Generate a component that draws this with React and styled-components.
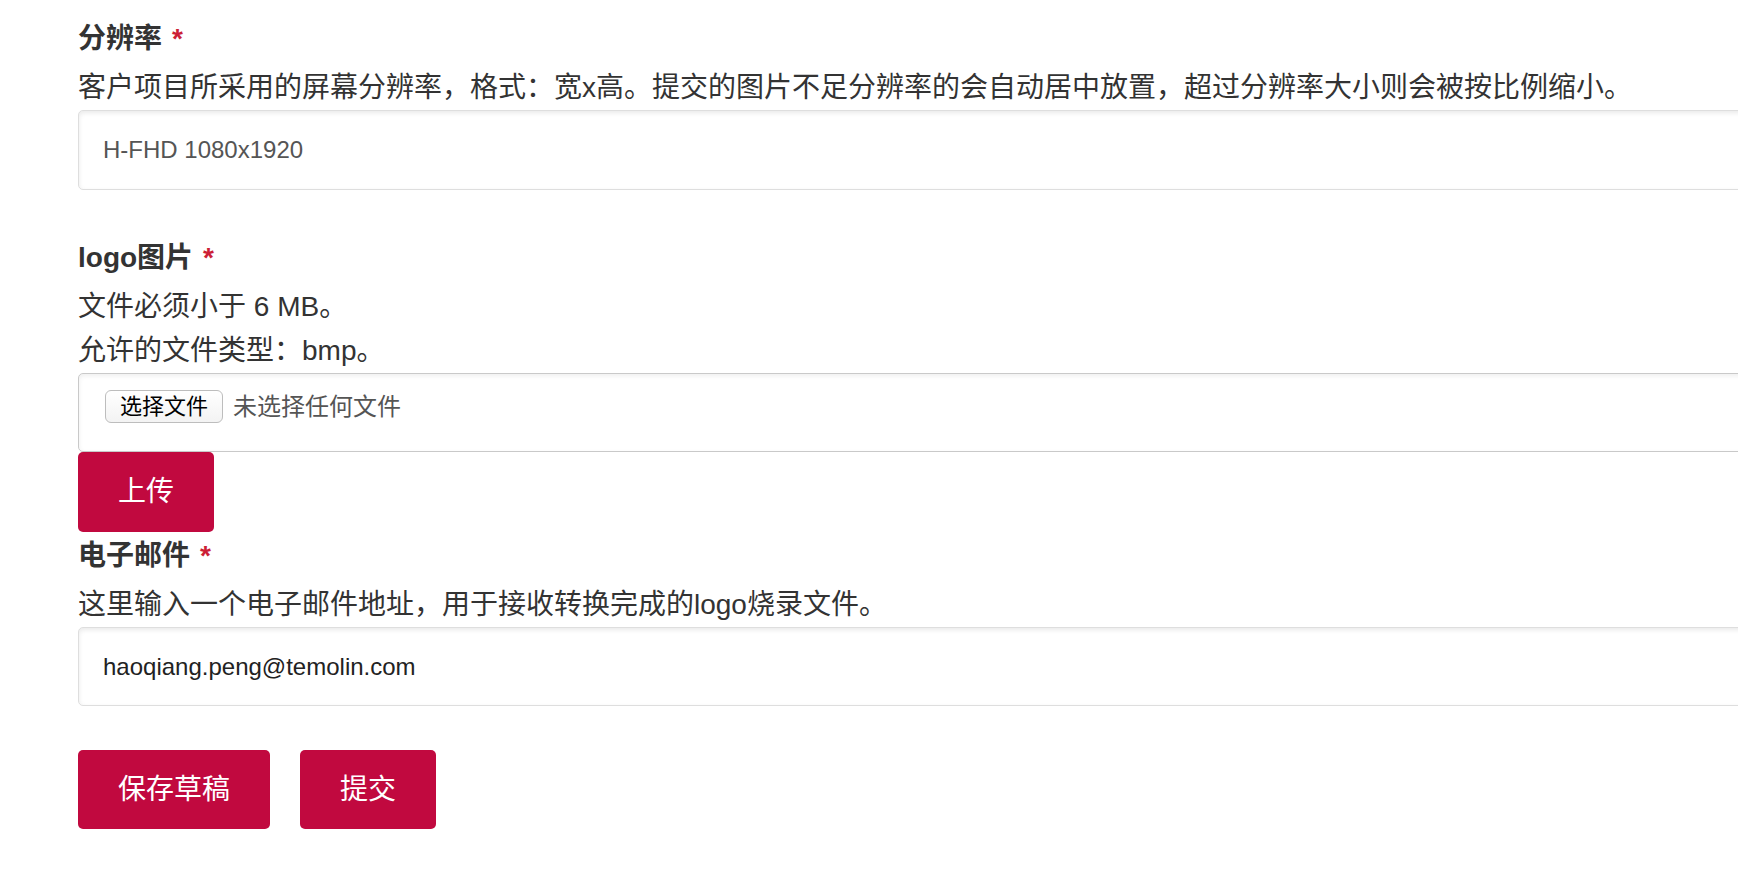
import React from "react";
import styled, { createGlobalStyle } from "styled-components";

const GlobalStyle = createGlobalStyle`
  html, body {
    margin: 0;
    padding: 0;
    overflow: hidden;
    background: #ffffff;
  }
  body {
    font-family: "Liberation Sans", "Noto Sans CJK SC", sans-serif;
    color: #333333;
  }
  * { box-sizing: border-box; }
`;

const Page = styled.form`
  width: 1800px;
  padding: 19px 0 0 78px;
`;

const FormItem = styled.div`
  display: flex;
  flex-direction: column;
  align-items: flex-start;
  margin-bottom: ${(p) => p.$gap}px;
`;

const Label = styled.label`
  font-size: 28px;
  line-height: 40px;
  font-weight: 700;
  color: #333333;
  margin-bottom: 7px;
`;

const Required = styled.span`
  color: #cc1f36;
  margin-left: 10px;
`;

const Description = styled.div`
  font-size: 28px;
  line-height: 44px;
  color: #333333;
`;

const TextInput = styled.input`
  display: block;
  width: 1700px;
  height: ${(p) => p.$height}px;
  padding: 0 24px;
  font-family: "Liberation Sans", "Noto Sans CJK SC", sans-serif;
  font-size: 24px;
  color: #222222;
  background: #ffffff;
  border: 1px solid #dedede;
  border-radius: 5px;
  box-shadow: inset 0 2px 5px rgba(0, 0, 0, 0.09);
  outline: none;

  &::placeholder {
    color: #555555;
    opacity: 1;
  }
`;

const FileBox = styled.div`
  display: flex;
  align-items: center;
  gap: 10px;
  width: 1700px;
  height: 79px;
  padding: 16px 26px 0 26px;
  align-items: flex-start;
  background: #ffffff;
  border: 1px solid #c9c9c9;
  border-radius: 5px;
  box-shadow: inset 0 2px 5px rgba(0, 0, 0, 0.07);
`;

const FileButton = styled.button`
  height: 33px;
  padding: 0 14px;
  font-family: "Liberation Sans", "Noto Sans CJK SC", sans-serif;
  font-size: 22px;
  line-height: 31px;
  color: #000000;
  background: linear-gradient(#ffffff, #f3f3f3);
  border: 1px solid #bdbdbd;
  border-radius: 6px;
  cursor: pointer;
`;

const FileStatus = styled.span`
  font-size: 24px;
  line-height: 33px;
  color: #555555;
`;

const PrimaryButton = styled.button`
  height: ${(p) => p.$height}px;
  padding: 0 40px;
  font-family: "Liberation Sans", "Noto Sans CJK SC", sans-serif;
  font-size: 28px;
  line-height: 1;
  color: #ffffff;
  background: #c1093f;
  border: none;
  border-radius: 5px;
  cursor: pointer;
`;

const Actions = styled.div`
  display: flex;
  gap: 30px;
`;

export default function App() {
  return (
    <>
      <GlobalStyle />
      <Page onSubmit={(e) => e.preventDefault()}>
        <FormItem $gap={48}>
          <Label>
            分辨率<Required>*</Required>
          </Label>
          <Description>
            客户项目所采用的屏幕分辨率，格式：宽x高。提交的图片不足分辨率的会自动居中放置，超过分辨率大小则会被按比例缩小。
          </Description>
          <TextInput $height={80} placeholder="H-FHD 1080x1920" />
        </FormItem>

        <FormItem $gap={4}>
          <Label>
            logo图片<Required>*</Required>
          </Label>
          <Description>文件必须小于 6 MB。</Description>
          <Description>允许的文件类型：bmp。</Description>
          <FileBox>
            <FileButton type="button">选择文件</FileButton>
            <FileStatus>未选择任何文件</FileStatus>
          </FileBox>
          <PrimaryButton type="button" $height={80}>
            上传
          </PrimaryButton>
        </FormItem>

        <FormItem $gap={44}>
          <Label>
            电子邮件<Required>*</Required>
          </Label>
          <Description>
            这里输入一个电子邮件地址，用于接收转换完成的logo烧录文件。
          </Description>
          <TextInput $height={79} defaultValue="haoqiang.peng@temolin.com" />
        </FormItem>

        <Actions>
          <PrimaryButton type="button" $height={79}>
            保存草稿
          </PrimaryButton>
          <PrimaryButton type="submit" $height={79}>
            提交
          </PrimaryButton>
        </Actions>
      </Page>
    </>
  );
}
